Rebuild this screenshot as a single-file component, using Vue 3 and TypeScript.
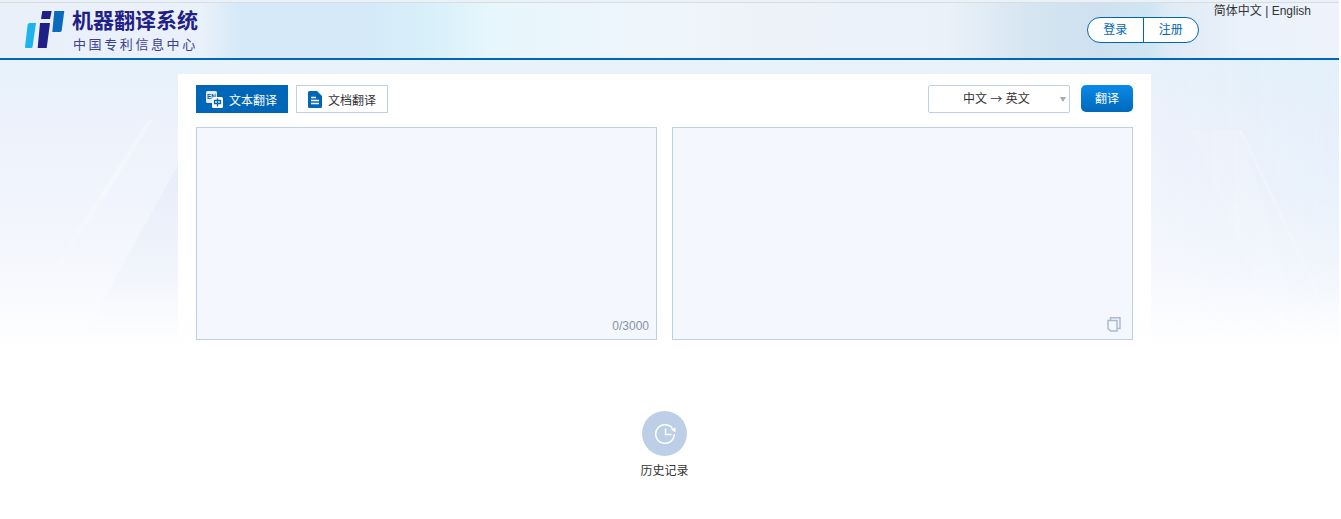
<script setup lang="ts">
import { ref } from 'vue'

const source = ref('')
const maxLength = 3000
</script>

<template>
  <div class="page">
    <div class="bg-shapes">
      <i class="shape s1"></i>
      <i class="shape s2"></i>
      <i class="shape s3"></i>
      <i class="shape s4"></i>
    </div>
    <header class="header">
      <div class="brand">
        <svg class="logo" width="40" height="40" viewBox="0 0 40 40">
          <path d="M2.700 15.500Q3 14 4.500 14H11L7.500 38Q7.300 39 6 39H1Q-0.200 39 0 37.500Z" fill="#1db4ee" />
          <path d="M15 14H25L21.700 39H12.700Z" fill="#1f2187" />
          <path d="M17.300 2H26.700L25 10H16Z" fill="#1f2187" />
          <path d="M29.300 2H39.300L36.700 21.500Q36.400 23 34.900 23H27.300Z" fill="#0a6bbb" />
        </svg>
        <div class="brand-text">
          <div class="brand-title">机器翻译系统</div>
          <div class="brand-sub">中国专利信息中心</div>
        </div>
      </div>
      <div class="account">
        <div class="lang">简体中文 | English</div>
        <div class="auth">
          <a class="auth-btn">登录</a>
          <a class="auth-btn">注册</a>
        </div>
      </div>
    </header>

    <main class="panel">
      <div class="toolbar">
        <div class="tabs">
          <div class="tab active">
            <svg width="20" height="18" viewBox="0 0 20 18">
              <rect x="1" y="1" width="11" height="12" rx="1.500" fill="#e3ecf8" />
              <text x="2" y="8.500" class="en">EN</text>
              <rect x="7" y="7" width="11" height="11" rx="1.500" fill="#fff" />
              <path d="M12.500 8.500V16.500M9.500 10.500H15.500V13.500H9.500Z" fill="none" stroke="#0067b8" stroke-width="1.300" />
            </svg>
            <span>文本翻译</span>
          </div>
          <div class="tab">
            <svg width="14" height="17" viewBox="0 0 14 17">
              <path d="M1.500 0H9L14 5V15.500Q14 17 12.500 17H1.500Q0 17 0 15.500V1.500Q0 0 1.500 0Z" fill="#0067b8" />
              <path d="M3 6.500H8M3 9.500H11M3 12.500H11" stroke="#fff" stroke-width="1.300" />
            </svg>
            <span>文档翻译</span>
          </div>
        </div>
        <div class="actions">
          <div class="select">
            <span>中文 <b class="arrow">→</b> 英文</span>
            <i class="caret"></i>
          </div>
          <button class="translate">翻译</button>
        </div>
      </div>

      <div class="editors">
        <div class="box">
          <textarea v-model="source" class="input"></textarea>
          <span class="count">{{ source.length }}/{{ maxLength }}</span>
        </div>
        <div class="box">
          <svg class="copy" width="14" height="15" viewBox="0 0 14 15" fill="none" stroke="#a9bbd3" stroke-width="1.500">
            <path d="M3.500 3V0.800H13V11.500H10.500" />
            <path d="M1 3.500H10V14H3.500L1 11.500Z" />
          </svg>
        </div>
      </div>
    </main>

    <section class="history">
      <div class="history-icon">
        <svg width="22" height="22" viewBox="0 0 22 22" fill="none" stroke="#fff" stroke-width="1.500">
          <path d="M18.500 5.500A9.300 9.300 0 1 0 20.300 11" />
          <path d="M11.500 5.500V11.500H17.500" />
          <path d="M17 6.500L21.500 4.500V9.500Z" fill="#fff" stroke="none" />
        </svg>
      </div>
      <div class="history-label">历史记录</div>
    </section>
  </div>
</template>

<style scoped>
.page {
  position: relative;
  width: 1339px;
  height: 519px;
  overflow: hidden;
  background:
    linear-gradient(180deg, rgba(228, 244, 252, 0.45) 60px, rgba(228, 244, 252, 0) 120px),
    linear-gradient(180deg, #e9f0fa 60px, #eff3fc 170px, #f5f7fd 260px, #fbfcfe 320px, #ffffff 352px);
  font-family: "Liberation Sans", "Noto Sans CJK SC", sans-serif;
  font-size: 12px;
  color: #333;
}
.bg-shapes {
  position: absolute;
  inset: 60px 0 159px 0;
  overflow: hidden;
  background: linear-gradient(90deg, rgba(220, 238, 250, 0) 1150px, rgba(220, 238, 250, 0.35) 1339px);
  -webkit-mask-image: linear-gradient(180deg, #000 45%, transparent 92%);
  mask-image: linear-gradient(180deg, #000 45%, transparent 92%);
}
.shape {
  position: absolute;
  display: block;
}
/* faint diagonal streaks behind the panel */
.s1 {
  left: 0;
  top: 0;
  width: 178px;
  height: 300px;
  background: rgba(255, 255, 255, 0.25);
  clip-path: polygon(148px 60px, 153px 60px, 34px 250px, 26px 250px);
}
.s2 {
  left: 0;
  top: 0;
  width: 178px;
  height: 300px;
  background: rgba(214, 226, 245, 0.28);
  clip-path: polygon(178px 105px, 178px 300px, 70px 300px);
}
.s3 {
  right: 0;
  top: 0;
  width: 188px;
  height: 300px;
  background: rgba(255, 255, 255, 0.1);
  clip-path: polygon(40px 70px, 90px 70px, 150px 270px, 125px 270px);
}
.s4 {
  right: 0;
  top: 0;
  width: 188px;
  height: 300px;
  background: rgba(255, 255, 255, 0.2);
  clip-path: polygon(88px 70px, 91px 70px, 172px 240px, 168px 240px);
}
.header {
  position: relative;
  box-sizing: border-box;
  height: 57px;
  margin-top: 3px;
  display: flex;
  justify-content: space-between;
  background: linear-gradient(90deg, #eaf0fa 0, #eaf1fa 200px, #d5e9f8 240px, #d5e9f8 360px, #d8f0fa 430px, #e6f6fc 490px, #eef5fb 660px, #edf2f9 775px, #eaf1f9 946px, #d5e5f1 1030px, #cfe1f0 1096px, #d0e5f2 1150px, #dfebf6 1170px, #ebf2fb 1250px, #eef3fb 1339px);
  box-shadow: 0 -1px 0 #dcdcdc;
  border-bottom: 2px solid #0067b8;
}
.brand {
  display: flex;
  align-items: flex-start;
  padding: 6px 0 0 25px;
}
.logo {
  flex: none;
}
.brand-text {
  margin-left: 7px;
}
.brand-title {
  font-size: 21px;
  line-height: 24px;
  font-weight: 700;
  color: #1f2187;
  white-space: nowrap;
}
.brand-sub {
  font-size: 13px;
  line-height: 18px;
  margin-top: 3px;
  margin-left: 1px;
  letter-spacing: 2.600px;
  color: #3a3f90;
  white-space: nowrap;
}
.account {
  position: relative;
  padding: 14px 140px 0 0;
}
.lang {
  position: absolute;
  top: 0;
  right: 28px;
  font-size: 12px;
  line-height: 16px;
  white-space: nowrap;
}
.auth {
  box-sizing: border-box;
  display: flex;
  width: 112px;
  height: 26px;
  background: #fff;
  border: 1px solid #0067b8;
  border-radius: 13px;
}
.auth-btn {
  flex: 1;
  text-align: center;
  line-height: 24px;
  color: #0067b8;
}
.auth-btn + .auth-btn {
  border-left: 1px solid #0067b8;
}
.panel {
  position: relative;
  box-sizing: border-box;
  width: 973px;
  height: 267px;
  margin: 14px 0 0 178px;
  padding: 11px 18px 0;
  background: linear-gradient(180deg, #ffffff 85%, rgba(255, 255, 255, 0.6) 100%);
}
.toolbar {
  display: flex;
  justify-content: space-between;
  height: 28px;
}
.tabs,
.actions {
  display: flex;
}
.tabs {
  gap: 8px;
}
.tab {
  box-sizing: border-box;
  width: 92px;
  height: 28px;
  display: flex;
  align-items: center;
  gap: 6px;
  padding-left: 11px;
  border: 1px solid #bfd0e6;
  color: #333;
  background: #fff;
}
.tab.active {
  gap: 4px;
  padding-left: 8px;
  background: #0067b8;
  border-color: #0067b8;
  color: #fff;
}
.en {
  font-size: 6.500px;
  font-weight: 700;
  fill: #0067b8;
}
.actions {
  gap: 11px;
}
.select {
  position: relative;
  box-sizing: border-box;
  width: 142px;
  height: 28px;
  border: 1px solid #bfd0e6;
  border-radius: 2px;
  background: #fff;
  line-height: 26px;
  padding-left: 34px;
  color: #333;
  white-space: nowrap;
}
.arrow {
  font-family: "Noto Sans CJK SC", sans-serif;
  font-weight: 400;
  vertical-align: -1px;
}
.caret {
  position: absolute;
  right: 3px;
  top: 11px;
  border: 3px solid transparent;
  border-top: 5px solid #aaa;
  border-bottom: 0;
}
.translate {
  width: 52px;
  height: 27px;
  padding: 0 0 2px;
  border: 0;
  border-radius: 5px;
  background: linear-gradient(180deg, #0a8aea, #0068b9);
  color: #fff;
  font-family: inherit;
  font-size: 12px;
}
.editors {
  display: grid;
  grid-template-columns: 461px 461px;
  gap: 15px;
  margin-top: 14px;
}
.box {
  position: relative;
  box-sizing: border-box;
  height: 213px;
  border: 1px solid #bfd0e6;
  background: #f4f7fd;
}
.input {
  display: block;
  box-sizing: border-box;
  width: 100%;
  height: 100%;
  padding: 10px;
  border: 0;
  outline: 0;
  resize: none;
  background: transparent;
}
.count {
  position: absolute;
  right: 7px;
  bottom: 6px;
  line-height: 14px;
  color: #8593a8;
}
.copy {
  position: absolute;
  right: 11px;
  bottom: 7px;
}
.history {
  position: relative;
  width: 973px;
  margin: 70px 0 0 178px;
  display: flex;
  flex-direction: column;
  align-items: center;
}
.history-icon {
  width: 45px;
  height: 45px;
  border-radius: 50%;
  background: #bdcfe6;
  display: flex;
  align-items: center;
  justify-content: center;
}
.history-label {
  margin-top: 7px;
  line-height: 16px;
}
</style>

<style>
html,
body {
  background: #fff;
}
</style>
